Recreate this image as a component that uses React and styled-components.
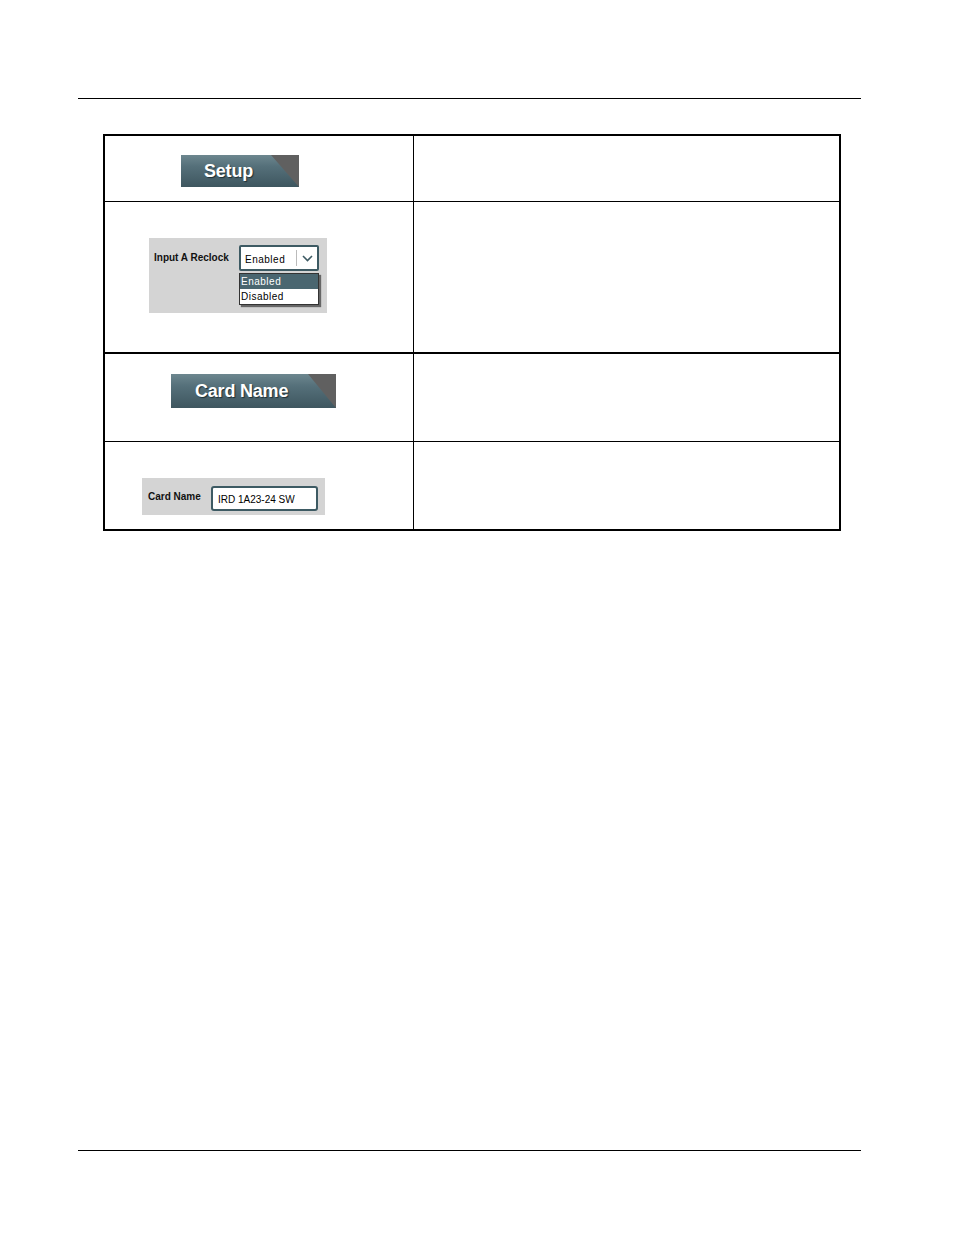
import React from 'react';
import styled, { createGlobalStyle } from 'styled-components';

const GlobalStyle = createGlobalStyle`
  body {
    margin: 0;
    background: #fff;
    font-family: "Liberation Sans", Arial, sans-serif;
  }
`;

const Page = styled.div`
  width: 954px;
  height: 1235px;
  position: relative;
  box-sizing: border-box;
  padding-top: 98px;
`;

const Rule = styled.div`
  margin-left: 78px;
  width: 783px;
  height: 1px;
  background: #000;
`;

const Footer = styled(Rule)`
  position: absolute;
  top: 1150px;
  left: 0;
`;

const Table = styled.div`
  margin: 35px 0 0 103px;
  width: 738px;
  border: 2px solid #000;
  box-sizing: border-box;
`;

const Row = styled.div`
  display: flex;
  height: ${p => p.h}px;
  border-top: ${p => p.line || 0}px solid #000;
`;

const LeftCell = styled.div`
  flex: none;
  width: 309px;
  box-sizing: border-box;
  border-right: 1px solid #000;
  padding: ${p => p.top}px 0 0 ${p => p.indent}px;
`;

const RightCell = styled.div`
  flex: 1;
`;

const Tab = styled.div`
  position: relative;
  width: ${p => p.w}px;
  height: ${p => p.h}px;
  background: #606060;
  display: flex;
  align-items: center;
  &::before {
    content: '';
    position: absolute;
    inset: 0;
    background: linear-gradient(#6d878f 0%, #55707a 35%, #3e565f 100%);
    clip-path: polygon(0 0, calc(100% - 28px) 0, 100% 100%, 0 100%);
  }
`;

const TabText = styled.span`
  position: relative;
  padding-left: ${p => p.pad}px;
  color: #fff;
  font-weight: bold;
  font-size: 18px;
  letter-spacing: -0.2px;
  text-shadow: 1px 1px 1px #1f2f35;
`;

const Panel = styled.div`
  width: ${p => p.w}px;
  height: ${p => p.h}px;
  background: #d4d4d4;
  display: flex;
  box-sizing: border-box;
  padding: ${p => p.pad};
`;

const Label = styled.div`
  font-size: 10px;
  font-weight: bold;
  color: #111;
  width: ${p => p.w}px;
  margin-top: ${p => p.top}px;
  white-space: nowrap;
`;

const SelectWrap = styled.div`
  position: relative;
`;

const Select = styled.div`
  width: 80px;
  height: 26px;
  box-sizing: border-box;
  border: 2px solid #3d5a63;
  border-radius: 2px;
  background: #fff;
  display: flex;
  align-items: center;
  font-size: 10px;
  letter-spacing: 0.5px;
  padding-left: 4px;
`;

const SelectValue = styled.span`
  flex: 1;
  padding-top: 2px;
`;

const Divider = styled.span`
  width: 1px;
  height: 16px;
  background: #bbb;
`;

const Chevron = styled.span`
  width: 20px;
  display: flex;
  justify-content: center;
`;

const Options = styled.div`
  margin-top: 2px;
  width: 78px;
  border: 1px solid #333;
  background: #fff;
  box-shadow: 2px 2px 1px #666;
  font-size: 10px;
  letter-spacing: 0.5px;
`;

const Option = styled.div`
  height: 15px;
  line-height: 16px;
  padding-left: 1px;
  background: ${p => (p.active ? '#4a6670' : '#fff')};
  color: ${p => (p.active ? '#fff' : '#000')};
`;

const TextInput = styled.div`
  width: 107px;
  height: 25px;
  box-sizing: border-box;
  border: 2px solid #3d5a63;
  border-radius: 3px;
  background: #fff;
  font-size: 10px;
  padding: 6px 0 0 5px;
  white-space: nowrap;
`;

export default function App() {
  return (
    <Page>
      <GlobalStyle />
      <Rule />
      <Table>
        <Row h={65}>
          <LeftCell top={19} indent={76}>
            <Tab w={118} h={32}>
              <TabText pad={23}>Setup</TabText>
            </Tab>
          </LeftCell>
          <RightCell />
        </Row>
        <Row h={150} line={1}>
          <LeftCell top={36} indent={44}>
            <Panel w={178} h={75} pad="7px 0 0 5px">
              <Label w={85} top={7}>Input A Reclock</Label>
              <SelectWrap>
                <Select>
                  <SelectValue>Enabled</SelectValue>
                  <Divider />
                  <Chevron>
                    <svg width="11" height="7" viewBox="0 0 11 7">
                      <path d="M1 1l4.5 4.5L10 1" fill="none" stroke="#3d5a63" strokeWidth="1.6" />
                    </svg>
                  </Chevron>
                </Select>
                <Options>
                  <Option active>Enabled</Option>
                  <Option>Disabled</Option>
                </Options>
              </SelectWrap>
            </Panel>
          </LeftCell>
          <RightCell />
        </Row>
        <Row h={87} line={2}>
          <LeftCell top={20} indent={66}>
            <Tab w={165} h={34}>
              <TabText pad={24}>Card Name</TabText>
            </Tab>
          </LeftCell>
          <RightCell />
        </Row>
        <Row h={87} line={1}>
          <LeftCell top={36} indent={37}>
            <Panel w={183} h={37} pad="8px 0 0 6px">
              <Label w={63} top={5}>Card Name</Label>
              <TextInput>IRD 1A23-24 SW</TextInput>
            </Panel>
          </LeftCell>
          <RightCell />
        </Row>
      </Table>
      <Footer />
    </Page>
  );
}
